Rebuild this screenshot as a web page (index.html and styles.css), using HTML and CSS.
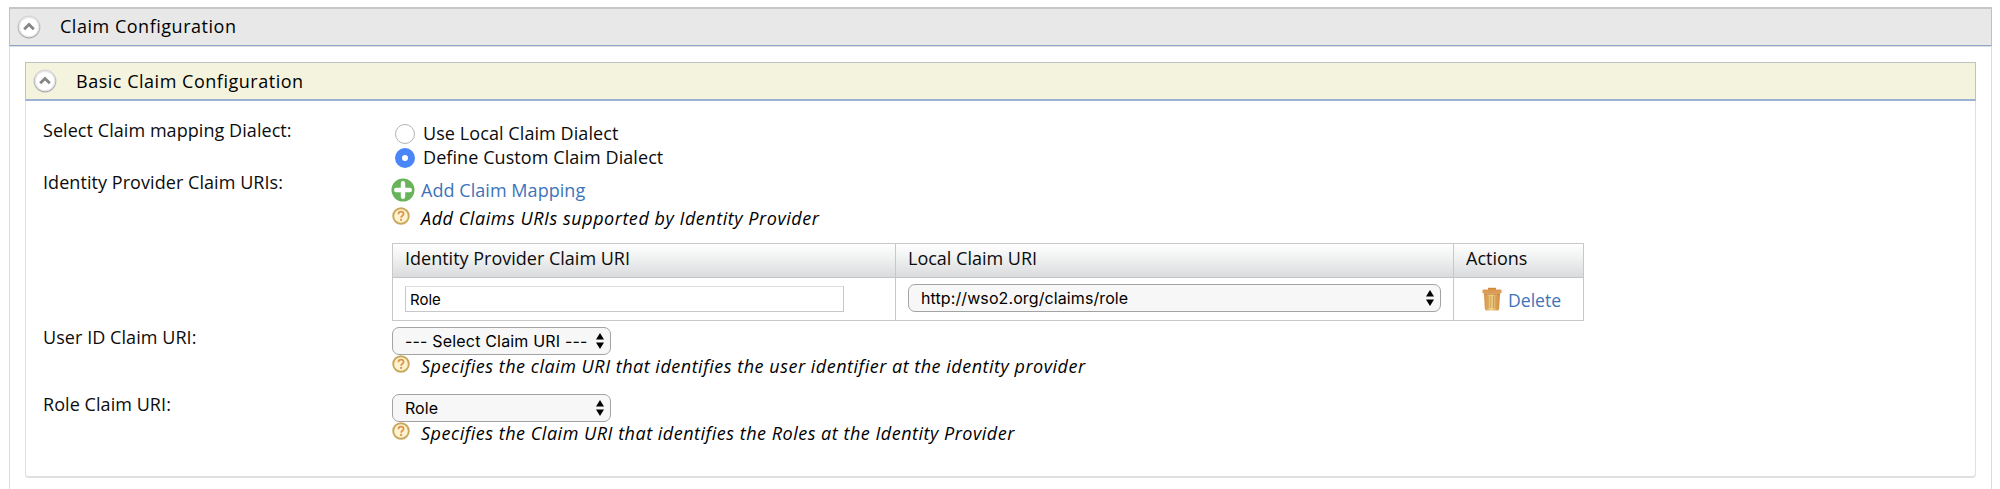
FILE: index.html
```html
<!DOCTYPE html>
<html lang="en">
<head>
<meta charset="utf-8">
<title>Claim Configuration</title>
<link rel="stylesheet" href="styles.css">
</head>
<body>
<svg class="defs" width="0" height="0">
  <defs>
    <linearGradient id="knob" x1="0" y1="0" x2="0" y2="1"><stop offset="0" stop-color="#d6d6d6"/><stop offset="1" stop-color="#a6a6a6"/></linearGradient>
    <linearGradient id="bin" x1="0" y1="0" x2="1" y2="0"><stop offset="0" stop-color="#d28a3c"/><stop offset=".45" stop-color="#f0d690"/><stop offset="1" stop-color="#cf8438"/></linearGradient>
    <symbol id="collapse" viewBox="0 0 24 24">
      <circle cx="12" cy="12" r="10.8" fill="#fff" stroke="url(#knob)" stroke-width="1.3"/>
      <circle cx="12" cy="12" r="9.7" fill="none" stroke="#e6e6e6" stroke-width="1.2"/>
      <path d="M7.2 14.2 12 9.4l4.8 4.8" fill="none" stroke="#858585" stroke-width="2.8"/>
    </symbol>
    <symbol id="help" viewBox="0 0 18 18">
      <circle cx="9" cy="9" r="7.8" fill="#fdf3cf" stroke="#c9a85e" stroke-width="1.9"/>
      <path d="M6.4 7.2C6.5 5.4 7.6 4.7 9 4.7c1.5 0 2.6.8 2.6 2.2 0 1.9-2.5 1.9-2.5 3.9" fill="none" stroke="#e2914a" stroke-width="1.7"/>
      <circle cx="9.1" cy="12.9" r="1.1" fill="#e2914a"/>
    </symbol>
  </defs>
</svg>
<section class="panel">
  <header class="bar bar-main"><svg class="toggle"><use href="#collapse"/></svg><span>Claim Configuration</span></header>
  <div class="panel-body">
    <section class="box">
      <header class="bar bar-sub"><svg class="toggle"><use href="#collapse"/></svg><span>Basic Claim Configuration</span></header>
      <div class="form">
        <div class="label">Select Claim mapping Dialect:</div>
        <div class="field dialects">
          <label class="option"><i class="radio"></i>Use Local Claim Dialect</label>
          <label class="option"><i class="radio checked"></i>Define Custom Claim Dialect</label>
        </div>
        <div class="label">Identity Provider Claim URIs:</div>
        <div class="field mappings">
          <a class="add"><svg class="plus" viewBox="0 0 24 24"><circle cx="12" cy="12" r="11.5" fill="#69b35b"/><path d="M12 5.2v13.6M5.2 12h13.6" stroke="#fff" stroke-width="4.4" stroke-linecap="round"/></svg>Add Claim Mapping</a>
          <p class="hint"><svg class="help"><use href="#help"/></svg>Add Claims URIs supported by Identity Provider</p>
          <div class="table">
            <div class="th">Identity Provider Claim URI</div><div class="th">Local Claim URI</div><div class="th">Actions</div>
            <div class="td"><div class="input">Role</div></div>
            <div class="td"><div class="select wide"><span>http://wso2.org/claims/role</span><svg class="arrows" viewBox="0 0 8 16"><path d="M0 6.4 4 0l4 6.4zM0 9.6h8L4 16z"/></svg></div></div>
            <div class="td actions"><a class="delete"><svg class="trash" viewBox="0 0 20 24"><path d="M6 .8h8v3H6z" fill="#d18a3d"/><rect x=".5" y="2.6" width="19" height="4" rx="1" fill="#dd9a52"/><path d="M2 7h16l-.9 15q-.1 1.4-1.600 1.400h-11Q3 23.400 2.900 22z" fill="url(#bin)"/><path d="M2 7h16" stroke="#c27a32" stroke-width="1"/><path d="M6 9v12M8.800 9v12M11.500 9v12M14.200 9v12" stroke="#c9974a" stroke-width=".9"/></svg><span>Delete</span></a></div>
          </div>
        </div>
        <div class="label">User ID Claim URI:</div>
        <div class="field">
          <div class="select"><span class="prompt">--- Select Claim URI ---</span><svg class="arrows" viewBox="0 0 8 16"><path d="M0 6.400 4 0l4 6.400zM0 9.600h8L4 16z"/></svg></div>
          <p class="hint"><svg class="help"><use href="#help"/></svg>Specifies the claim URI that identifies the user identifier at the identity provider</p>
        </div>
        <div class="label">Role Claim URI:</div>
        <div class="field">
          <div class="select"><span>Role</span><svg class="arrows" viewBox="0 0 8 16"><path d="M0 6.400 4 0l4 6.400zM0 9.600h8L4 16z"/></svg></div>
          <p class="hint"><svg class="help"><use href="#help"/></svg>Specifies the Claim URI that identifies the Roles at the Identity Provider</p>
        </div>
      </div>
    </section>
  </div>
</section>
</body>
</html>
```
FILE: styles.css
```css
* { box-sizing: border-box; }
html { overflow: hidden; }
body {
  margin: 0;
  padding: 7px 9px 0;
  height: 489px;
  overflow: hidden;
  background: #fff;
  color: #0c0c0c;
  font: 18px/24px "Open Sans", "Noto Sans", sans-serif;
}
p { margin: 0; }
svg { display: block; flex: none; }
.panel { width: 1983px; }
.bar {
  display: flex;
  align-items: center;
  height: 39px;
  padding-left: 7px;
  border: 1px solid #bfc1c3;
  border-bottom: 1px solid #8fa5c8;
  color: #000;
  letter-spacing: .52px;
}
.bar span { margin: 0 0 2px 19px; }
.bar-main { background: #e8e8e8; border-top: 2px solid #c6c6c6; box-shadow: 0 1px 0 #dedede; }
.bar-sub { background: #f4f3de; border-bottom: 2px solid #9db1d3; }
.bar-sub span { margin-bottom: 0; }
.toggle { width: 24px; height: 24px; }
.panel-body {
  height: 460px;
  padding: 16px 15px 0;
  border: 1px solid #dcdcdc;
  border-width: 0 1px;
}
.box { width: 1951px; }
.form {
  display: grid;
  grid-template-columns: 349px 1fr;
  grid-template-rows: 52px 155px 67px 67px;
  height: 377px;
  padding: 17px 0 0 17px;
  border: 1px solid #e0e0e0;
  border-width: 0 1px 2px;
  border-radius: 0 0 4px 4px;
}
.label { letter-spacing: .06px; }
.field { padding-top: 2px; }
.dialects { padding-top: 3px; }
.option { display: flex; align-items: center; letter-spacing: .08px; }
.radio {
  width: 20px;
  height: 20px;
  margin: 2px 8px 0 3px;
  border: 1px solid #b4b4b4;
  border-radius: 50%;
  background: #fff;
}
.radio.checked { border: 7px solid #4a86f7; }
.mappings { padding-top: 8px; }
.add, .delete { display: flex; align-items: center; color: #3d74b8; }
.add { letter-spacing: .05px; }
.plus { width: 24px; height: 24px; margin: 0 6px 0 -1px; }
.hint { display: flex; font-style: italic; letter-spacing: .51px; margin-top: -1px; color: #000; white-space: nowrap; }
.mappings .hint { margin-top: 4px; letter-spacing: .54px; }
.help { width: 18px; height: 18px; margin: 1px 11px 0 0; }
.table {
  display: grid;
  grid-template-columns: 503px 558px 130px;
  grid-template-rows: 34px 42px;
  width: 1192px;
  margin-top: 13px;
  border: solid #c8c8c8;
  border-width: 1px 0 1px 1px;
}
.th {
  padding: 2px 0 0 12px;
  border-right: 1px solid #c8c8c8;
  border-bottom: 1px solid #c4c4c4;
  background: linear-gradient(#fff, #f1f2f2 40%, #d9dbdd);
}
.td { padding: 7px 0 0 12px; border-right: 1px solid #c8c8c8; }
.input {
  width: 439px;
  height: 26px;
  margin-top: 1px;
  padding-left: 4px;
  border: 1px solid #c8c8c8;
  border-top-color: #dcdcdc;
  color: #000;
  font: 15px/26px Inter, sans-serif;
}
.select {
  display: flex;
  align-items: center;
  justify-content: space-between;
  width: 219px;
  height: 28px;
  padding: 0 6px 0 12px;
  border: 1px solid #a3a3a3;
  border-radius: 7px;
  background: #f7f7f7;
  color: #000;
  font: 16px/26px Inter, sans-serif;
  letter-spacing: .05px;
  white-space: nowrap;
}
.prompt { letter-spacing: .18px; }
.select.wide { width: 533px; letter-spacing: .1px; margin-top: -1px; }
.arrows { width: 8px; height: 16px; }
.td.actions { padding: 10px 0 0 28px; }
.delete { font-size: 17.6px; }
.trash { width: 20px; height: 24px; margin: -1px 6px 1px 0; }
```
